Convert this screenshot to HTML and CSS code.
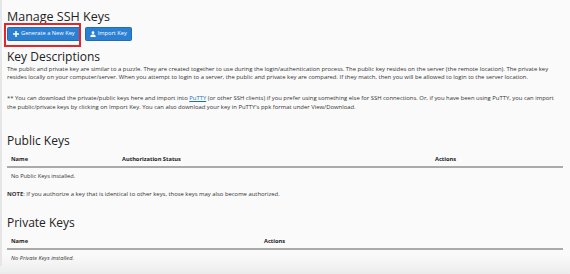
FILE: index.html
```html
<!DOCTYPE html>
<html>
<head>
<meta charset="utf-8">
<link rel="stylesheet" href="styles.css">
</head>
<body>
<div class="page">
  <h1 class="title">Manage SSH Keys</h1>
  <div class="toolbar">
    <button class="btn">
      <svg class="ico" viewBox="0 0 8 8" width="6" height="6"><path d="M3 0h2v3h3v2H5v3H3V5H0V3h3z" fill="#fff"/></svg>
      Generate a New Key
    </button>
    <button class="btn">
      <svg class="ico" viewBox="0 0 8 8" width="6" height="6"><circle cx="4" cy="2.2" r="1.8" fill="#fff"/><path d="M0.5 8V6.6C0.5 5.4 2 4.6 4 4.6S7.5 5.4 7.5 6.6V8z" fill="#fff"/></svg>
      Import Key
    </button>
    <span class="highlight"></span>
  </div>

  <h2 class="heading">Key Descriptions</h2>
  <p class="text">The public and private key are similar to a puzzle. They are created together to use during the login/authentication process. The public key resides on the server (the remote location). The private key resides locally on your computer/server. When you attempt to login to a server, the public and private key are compared. If they match, then you will be allowed to login to the server location.</p>
  <p class="text gap">** You can download the private/public keys here and import into <a href="#" class="link">PuTTY</a> (or other SSH clients) if you prefer using something else for SSH connections. Or, if you have been using PuTTY, you can import the public/private keys by clicking on Import Key. You can also download your key in PuTTY's ppk format under View/Download.</p>

  <h2 class="heading section">Public Keys</h2>
  <table class="keys">
    <thead>
      <tr><th class="c-name">Name</th><th class="c-auth">Authorization Status</th><th>Actions</th></tr>
    </thead>
    <tbody>
      <tr><td colspan="3">No Public Keys installed.</td></tr>
    </tbody>
  </table>
  <p class="text note"><b>NOTE</b>: If you authorize a key that is identical to other keys, those keys may also become authorized.</p>

  <h2 class="heading section2">Private Keys</h2>
  <table class="keys">
    <thead>
      <tr><th class="c-name2">Name</th><th>Actions</th></tr>
    </thead>
    <tbody>
      <tr><td colspan="2" class="empty">No Private Keys installed.</td></tr>
    </tbody>
  </table>
</div>
</body>
</html>
```

FILE: styles.css
```css
html, body {
  margin: 0;
  padding: 0;
}
body {
  width: 570px;
  height: 274px;
  overflow: hidden;
  background: linear-gradient(to bottom, #fafafa 0, #fafafa 255px, #ececec 274px);
  font-family: "Open Sans", "DejaVu Sans", sans-serif;
  color: #333;
}
.page {
  border-left: 2px solid #e6e6e6;
  padding: 9px 7px 0 5px;
  width: 556px;
}
.title {
  margin: 0;
  font-size: 12.5px;
  line-height: 15px;
  font-weight: 400;
  color: #222;
}
.toolbar {
  position: relative;
  display: flex;
  gap: 4px;
  margin-top: 3px;
  padding-left: 0;
}
.btn {
  display: inline-flex;
  align-items: center;
  gap: 2px;
  height: 13.5px;
  padding: 0 5px;
  background: #2c80d3;
  border: 1px solid #1f6cb8;
  border-radius: 1.5px;
  color: #fff;
  font-family: "Open Sans", sans-serif;
  font-size: 5.7px;
  line-height: 1;
}
.btn + .btn { padding: 0 4px; }
.ico { display: block; }
.highlight {
  position: absolute;
  left: -3px;
  top: -4px;
  width: 73px;
  height: 20px;
  border: 2px solid #e3262b;
}
.heading {
  margin: 8px 0 0;
  font-size: 12px;
  line-height: 15px;
  font-weight: 400;
  color: #222;
}
.text {
  margin: 1px 0 0;
  font-size: 5.9px;
  line-height: 8.4px;
  color: #333;
}
.text.gap { margin-top: 13px; }
.link { color: #1a6fc4; text-decoration: underline; }
.section { margin-top: 22px; }
.section2 { margin-top: 16px; }
.keys {
  width: 100%;
  border-collapse: collapse;
  margin-top: 4px;
  font-size: 5.7px;
}
.keys th {
  text-align: left;
  font-weight: 700;
  padding: 3px 4px;
  border-bottom: 2px solid #aaa;
  color: #222;
}
.keys td {
  padding: 4px 4px;
  color: #333;
}
.c-name { width: 103px; }
.c-auth { width: 305px; }
.c-name2 { width: 245px; }
.empty { font-style: italic; }
.note { margin-top: 6px; }
```
